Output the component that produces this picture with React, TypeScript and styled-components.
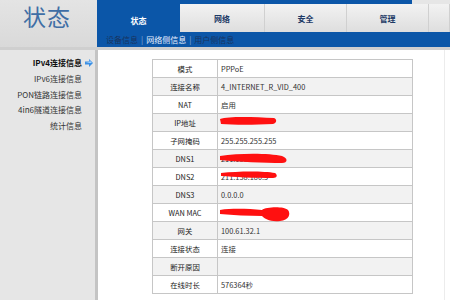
import React from "react";
import styled, { createGlobalStyle } from "styled-components";

const rows = [
  { label: "模式", value: "PPPoE" },
  { label: "连接名称", value: "4_INTERNET_R_VID_400" },
  { label: "NAT", value: "启用" },
  { label: "IP地址", value: "", mark: "ip" },
  { label: "子网掩码", value: "255.255.255.255" },
  { label: "DNS1", value: "211.138.180.2", mark: "dns1" },
  { label: "DNS2", value: "211.138.180.3", mark: "dns2" },
  { label: "DNS3", value: "0.0.0.0" },
  { label: "WAN MAC", value: "", mark: "mac" },
  { label: "网关", value: "100.61.32.1" },
  { label: "连接状态", value: "连接" },
  { label: "断开原因", value: "" },
  { label: "在线时长", value: "576364秒" },
];

const menu = ["IPv4连接信息", "IPv6连接信息", "PON链路连接信息", "4in6隧道连接信息", "统计信息"];

const GlobalStyle = createGlobalStyle`
  html, body {
    margin: 0;
    padding: 0;
    background: #ffffff;
  }
  body {
    font-family: "Noto Sans CJK SC", "Liberation Sans", sans-serif;
  }
`;

const Page = styled.div`
  width: 450px;
  height: 300px;
  overflow: hidden;
  display: flex;
  flex-direction: column;
`;

const Header = styled.div`
  display: flex;
  height: 47px;
  border-bottom: 3px solid #cfcfcf;
`;

const Brand = styled.div`
  width: 97px;
  background: linear-gradient(#e4e4e4, #d9d9d9);
  color: #3f6ea5;
  font-size: 23px;
  line-height: 23px;
  padding: 5px 0 0 23px;
  box-sizing: border-box;
  letter-spacing: 1px;
`;

const NavArea = styled.div`
  flex: 1;
  display: flex;
  flex-direction: column;
  background: #0b56a8;
`;

const TopStrip = styled.div`
  height: 4px;
  display: flex;
  justify-content: flex-end;
`;

const StripEnd = styled.div`
  width: 38px;
  background: #e6e6e6;
`;

const Tabs = styled.div`
  height: 28px;
  display: flex;
`;

const Tab = styled.div<{ $active?: boolean; $w: number }>`
  width: ${(p) => p.$w}px;
  display: flex;
  align-items: center;
  justify-content: center;
  font-size: 8px;
  font-weight: bold;
  color: ${(p) => (p.$active ? "#ffffff" : "#1d3a66")};
  padding-top: ${(p) => (p.$active ? 4 : 0)}px;
  box-sizing: border-box;
  background: ${(p) =>
    p.$active ? "transparent" : "linear-gradient(#f2f2f2, #dedede)"};
  border-right: ${(p) => (p.$active ? "none" : "1px solid #d0d0d0")};
`;

const SubNav = styled.div`
  height: 15px;
  display: flex;
  align-items: center;
  padding-left: 9px;
  font-size: 8px;
  gap: 3px;
`;

const SubLink = styled.span<{ $active?: boolean }>`
  color: ${(p) => (p.$active ? "#e8f0ff" : "#18335e")};
`;

const Sep = styled.span`
  color: #8fb0d8;
`;

const Body = styled.div`
  flex: 1;
  display: flex;
`;

const Sidebar = styled.div`
  width: 95px;
  background: #e6e6e6;
  border-right: 3px solid #c4c4c4;
  padding-top: 5px;
  display: flex;
  flex-direction: column;
`;

const MenuItem = styled.div<{ $active?: boolean }>`
  height: 15.7px;
  display: flex;
  align-items: center;
  justify-content: flex-end;
  gap: 3px;
  padding-right: 2px;
  font-size: 8px;
  color: ${(p) => (p.$active ? "#111111" : "#333333")};
  font-weight: ${(p) => (p.$active ? "bold" : "normal")};
`;

const IconSlot = styled.span`
  width: 8px;
  height: 8px;
  display: flex;
  align-items: center;
`;

const Content = styled.div`
  flex: 1;
  padding: 9px 0 0 54px;
  margin-right: 5px;
  border-right: 1px solid #ececec;
`;

const Table = styled.table`
  width: 261px;
  border-collapse: collapse;
  border: 1px solid #b9b9b9;
  font-size: 7.4px;
  color: #222222;
`;

const Row = styled.tr<{ $alt: boolean }>`
  height: 18px;
  background: ${(p) => (p.$alt ? "#f2f2f2" : "#ffffff")};
`;

const Label = styled.td`
  width: 64px;
  text-align: center;
  border: 1px solid #c6c6c6;
  padding: 0;
  line-height: 10px;
`;

const Value = styled.td`
  position: relative;
  border: 1px solid #c6c6c6;
  padding: 0 0 0 3px;
  line-height: 10px;
  color: #333333;
`;

const Scribble = styled.svg`
  position: absolute;
  left: 1px;
  top: 0;
`;

const marks: Record<string, React.ReactNode> = {
  ip: (
    <path d="M1 5 C10 2 35 3 55 4 C58 5 58 9 54 10 C35 11 15 11 2 10 Z" fill="#ff1010" />
  ),
  dns1: (
    <path d="M1 6 C20 3 50 3 63 6 C69 8 69 13 63 13 C45 13 20 12 1 10 Z" fill="#ff1010" />
  ),
  dns2: (
    <path d="M2 5 C20 3 45 3 56 5 C59 7 58 10 54 10 C35 10 15 9 2 8 Z" fill="#ff1010" />
  ),
  mac: (
    <path d="M1 6 C15 4 30 5 43 6 C47 3 64 2 69 6 C72 10 70 16 61 17 C51 18 46 15 43 12 C30 12 14 11 1 10 Z" fill="#ff1010" />
  ),
};

const Arrow = () => (
  <svg width="8" height="8" viewBox="0 0 8 8">
    <polygon points="0,2.5 4,2.5 4,0 8,4 4,8 4,5.5 0,5.5" fill="#3b8fe4" />
    <polygon points="0.5,3 4.5,3 4.5,1.2 7,4 4.5,4" fill="#9fd0ff" />
  </svg>
);

const App = () => {
  return (
    <Page>
      <GlobalStyle />
      <Header>
        <Brand>状态</Brand>
        <NavArea>
          <TopStrip>
            <StripEnd />
          </TopStrip>
          <Tabs>
            <Tab $active $w={83}>
              状态
            </Tab>
            <Tab $w={85}>网络</Tab>
            <Tab $w={82}>安全</Tab>
            <Tab $w={82}>管理</Tab>
            <Tab $w={21} />
          </Tabs>
          <SubNav>
            <SubLink>设备信息</SubLink>
            <Sep>|</Sep>
            <SubLink $active>网络侧信息</SubLink>
            <Sep>|</Sep>
            <SubLink>用户侧信息</SubLink>
          </SubNav>
        </NavArea>
      </Header>
      <Body>
        <Sidebar>
          {menu.map((m, i) => (
            <MenuItem key={m} $active={i === 0}>
              {m}
              <IconSlot>{i === 0 && <Arrow />}</IconSlot>
            </MenuItem>
          ))}
        </Sidebar>
        <Content>
          <Table>
            <tbody>
              {rows.map((r, i) => (
                <Row key={r.label} $alt={i % 2 === 1}>
                  <Label>{r.label}</Label>
                  <Value>
                    {r.value}
                    {r.mark && (
                      <Scribble width="80" height="18" viewBox="0 0 80 18">
                        {marks[r.mark]}
                      </Scribble>
                    )}
                  </Value>
                </Row>
              ))}
            </tbody>
          </Table>
        </Content>
      </Body>
    </Page>
  );
};

export default App;
